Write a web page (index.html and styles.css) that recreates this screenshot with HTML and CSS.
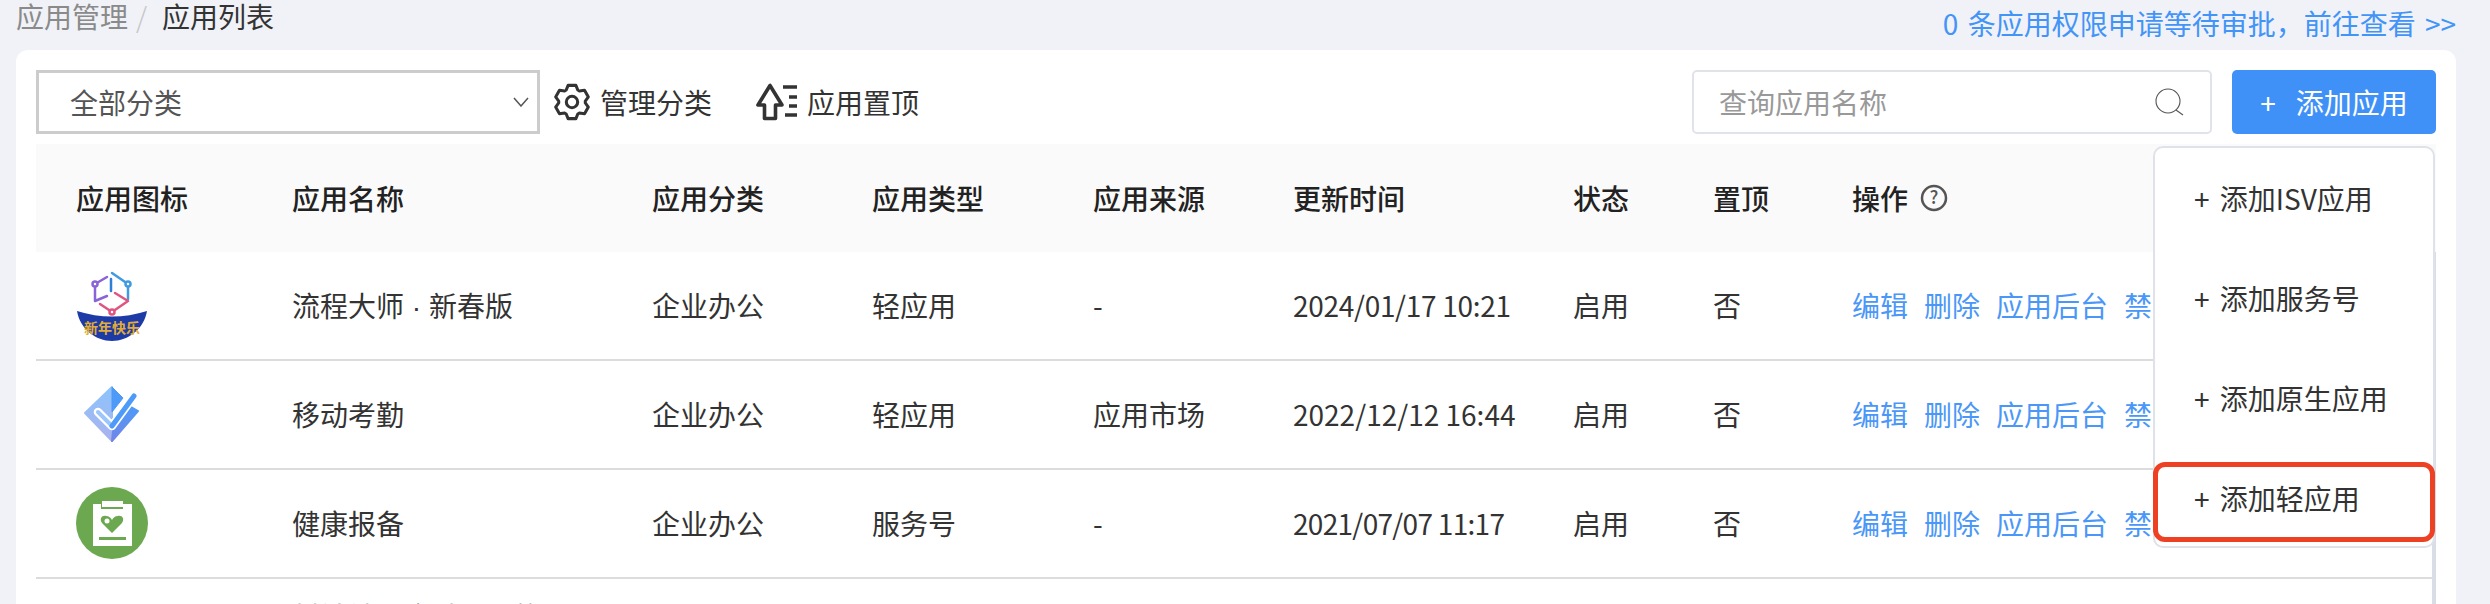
FILE: index.html
```html
<!DOCTYPE html>
<html lang="zh-CN">
<head>
    <meta charset="UTF-8">
    <title>应用列表</title>
    <link rel="stylesheet" href="styles.css">
</head>
<body>
    <div class="top-bar">
        <div class="breadcrumb">
            <span class="crumb-parent">应用管理</span>
            <span class="crumb-sep">/</span>
            <span class="crumb-current">应用列表</span>
        </div>
        <a class="approval-link">0 条应用权限申请等待审批，前往查看 &gt;&gt;</a>
    </div>

    <div class="card">
        <div class="toolbar">
            <div class="select-box">
                <span>全部分类</span>
                <svg class="chevron" width="16" height="10" viewBox="0 0 16 10"><path d="M1 1l7 8 7-8" fill="none" stroke="#555" stroke-width="1.5"/></svg>
            </div>
            <a class="tool-btn gear-btn">
                <svg width="38" height="38" viewBox="0 0 40 40" fill="none" stroke="#333" stroke-width="3.200" stroke-linejoin="round">
                    <path d="M13.9 7.4L15.9 2.5H24.1L26.1 7.4L27.8 8.4L33.2 7.7L37.2 14.7L34 19V21L37.2 25.3L33.2 32.3L27.8 31.6L26.1 32.6L24.1 37.5H15.9L13.9 32.6L12.2 31.6L6.8 32.3L2.8 25.3L6 21V19L2.8 14.7L6.8 7.7L12.2 8.4Z"/>
                    <circle cx="20" cy="20" r="6"/>
                </svg>
                管理分类
            </a>
            <a class="tool-btn pin-btn">
                <svg width="42" height="38" viewBox="0 0 42 38" fill="none" stroke="#333" stroke-width="3.600">
                    <path d="M14 2.500L2 22H8.500V35.500H19.500V22H26Z" stroke-linejoin="round"/>
                    <path d="M27 4H41M33 14H41M33 23H41M29 32H41"/>
                </svg>
                应用置顶
            </a>
            <div class="search-box">
                <span class="search-hint">查询应用名称</span>
                <svg width="30" height="28" viewBox="0 0 30 28" fill="none" stroke="#555" stroke-width="1.100"><circle cx="13" cy="13" r="12"/><path d="M21 22l7 5"/></svg>
            </div>
            <a class="add-btn"><span class="add-plus">+</span>添加应用</a>
        </div>

        <table class="app-table">
            <colgroup>
                <col class="col-icon"><col class="col-name"><col class="col-cate"><col class="col-type"><col class="col-src"><col class="col-time"><col class="col-state"><col class="col-top"><col class="col-ops">
            </colgroup>
            <thead>
                <tr>
                    <th>应用图标</th>
                    <th>应用名称</th>
                    <th>应用分类</th>
                    <th>应用类型</th>
                    <th>应用来源</th>
                    <th>更新时间</th>
                    <th>状态</th>
                    <th>置顶</th>
                    <th>
                        <span class="ops-head">操作
                            <svg width="28" height="28" viewBox="0 0 28 28"><circle cx="14" cy="14" r="12" fill="none" stroke="#555" stroke-width="2.500"/><text x="14" y="20" text-anchor="middle" class="help-mark">?</text></svg>
                        </span>
                    </th>
                </tr>
            </thead>
            <tbody>
                <tr>
                    <td>
                        <svg class="app-icon" viewBox="0 0 72 72" fill="none" stroke-width="2.500" stroke-linecap="round" stroke-linejoin="round">
                            <path d="M31 8L19 15V32L31 27" stroke="#8a63d8"/>
                            <path d="M36 4L52 15V30" stroke="#3f9ae0"/>
                            <path d="M35 10V22" stroke="#2f7fd6"/>
                            <path d="M24 35L36 43L52 32L39 24" stroke="#e0557f"/>
                            <circle cx="19" cy="15" r="2.500" fill="#fff" stroke="#8a63d8"/>
                            <circle cx="52" cy="15" r="2.500" fill="#fff" stroke="#3f9ae0"/>
                            <circle cx="36" cy="43" r="2.500" fill="#fff" stroke="#e0557f"/>
                            <path d="M1 42Q36 53 71 42C68 60 52 72 36 72C20 72 4 60 1 42Z" fill="#1d3ba6" stroke="none"/>
                            <text x="36" y="64" text-anchor="middle" class="icon-label">新年快乐</text>
                        </svg>
                    </td>
                    <td>流程大师<span class="name-dot"> · </span>新春版</td>
                    <td>企业办公</td>
                    <td>轻应用</td>
                    <td>-</td>
                    <td class="time-narrow">2024/01/17 10:21</td>
                    <td>启用</td>
                    <td>否</td>
                    <td><div class="ops"><a>编辑</a><a>删除</a><a>应用后台</a><a>禁用</a></div></td>
                </tr>
                <tr>
                    <td>
                        <svg class="app-icon" viewBox="0 0 72 72">
                            <defs>
                                <linearGradient id="leftHalf" x1="0" y1="0" x2="0" y2="1"><stop offset="0" stop-color="#8cc4fc"/><stop offset="1" stop-color="#aab2ee"/></linearGradient>
                                <linearGradient id="rightHalf" x1="0" y1="0" x2="0" y2="1"><stop offset="0" stop-color="#4d9af8"/><stop offset="1" stop-color="#7285e8"/></linearGradient>
                            </defs>
                            <path d="M36 9L9 35L36 63Z" fill="url(#leftHalf)" stroke="url(#leftHalf)" stroke-width="2" stroke-linejoin="round"/>
                            <path d="M36 9L47 20L36 34Z" fill="#4d9af8" stroke="#4d9af8" stroke-width="1" stroke-linejoin="round"/>
                            <path d="M37 53L55 29L62 33L36 63Z" fill="url(#rightHalf)" stroke="url(#rightHalf)" stroke-width="2" stroke-linejoin="round"/>
                            <path d="M22 34L36 48L58 18" fill="none" stroke="#fff" stroke-width="8.500" stroke-linecap="round" stroke-linejoin="round"/>
                            <path d="M22 34L36 48" fill="none" stroke="#9cc6fb" stroke-width="4" stroke-linecap="round"/>
                            <path d="M36 48L58 18" fill="none" stroke="#4d9af8" stroke-width="5" stroke-linecap="round"/>
                        </svg>
                    </td>
                    <td>移动考勤</td>
                    <td>企业办公</td>
                    <td>轻应用</td>
                    <td>应用市场</td>
                    <td>2022/12/12 16:44</td>
                    <td>启用</td>
                    <td>否</td>
                    <td><div class="ops"><a>编辑</a><a>删除</a><a>应用后台</a><a>禁用</a></div></td>
                </tr>
                <tr>
                    <td>
                        <svg class="app-icon" viewBox="0 0 72 72">
                            <circle cx="36" cy="36" r="36" fill="#6ca850"/>
                            <path d="M17 17H25V22H47V17H56V59H17Z" fill="#fff"/>
                            <rect x="26" y="14" width="21" height="6" fill="#fff"/>
                            <path d="M36 46L26 36C23 32 26 28 30 29C33 29 35 31 36 33C37 31 39 29 42 29C46 28 49 32 46 36Z" fill="#6ca850"/>
                            <circle cx="31" cy="34" r="2.500" fill="#fff"/>
                            <rect x="23" y="50" width="27" height="3" fill="#6ca850"/>
                        </svg>
                    </td>
                    <td>健康报备</td>
                    <td>企业办公</td>
                    <td>服务号</td>
                    <td>-</td>
                    <td class="time-narrower">2021/07/07 11:17</td>
                    <td>启用</td>
                    <td>否</td>
                    <td><div class="ops"><a>编辑</a><a>删除</a><a>应用后台</a><a>禁用</a></div></td>
                </tr>
                <tr>
                    <td></td>
                    <td class="long-name">村镇社区全域<span class="name-dot"> · </span>我的服</td>
                    <td></td><td></td><td></td><td></td><td></td><td></td><td></td>
                </tr>
            </tbody>
        </table>

        <div class="add-menu">
            <div class="menu-item">+ 添加ISV应用</div>
            <div class="menu-item">+ 添加服务号</div>
            <div class="menu-item">+ 添加原生应用</div>
            <div class="menu-item marked">+ 添加轻应用</div>
        </div>
    </div>
</body>
</html>
```

FILE: styles.css
```css
html, body {
    height: 604px;
    overflow: hidden;
}
body {
    margin: 0;
    padding: 0 34px 0 16px;
    background-color: #f0f2f7;
    color: #333;
    font-family: "Noto Sans CJK SC", "Liberation Sans", sans-serif;
    font-size: 28px;
}
a {
    cursor: pointer;
}

/* 顶部面包屑 */
.top-bar {
    display: flex;
    justify-content: space-between;
    align-items: flex-start;
    height: 50px;
}
.breadcrumb {
    display: flex;
    line-height: 32px;
}
.crumb-parent {
    color: #8a8a8a;
}
.crumb-sep {
    color: #c4c4c4;
    margin: 0 15px 0 8px;
    font-weight: 300;
}
.crumb-current {
    color: #333;
}
.approval-link {
    line-height: 46px;
    word-spacing: 3px;
    color: #4394f7;
}

/* 卡片 */
.card {
    position: relative;
    background-color: #fff;
    border-radius: 12px 12px 0 0;
    padding: 20px 20px 0;
}
.toolbar {
    display: flex;
    align-items: center;
    height: 64px;
    margin-bottom: 10px;
}
.select-box {
    display: flex;
    justify-content: space-between;
    align-items: center;
    box-sizing: border-box;
    width: 504px;
    height: 64px;
    padding: 0 8px 0 31px;
    border: 3px solid #ccc;
    color: #555;
}
.tool-btn {
    display: flex;
    align-items: center;
}
.gear-btn {
    margin-left: 13px;
}
.gear-btn svg {
    margin-right: 9px;
}
.pin-btn {
    margin-left: 44px;
}
.pin-btn svg {
    margin-right: 9px;
}
.search-box {
    display: flex;
    justify-content: space-between;
    align-items: center;
    box-sizing: border-box;
    width: 520px;
    height: 64px;
    margin-left: auto;
    padding: 0 25px 0 25px;
    border: 2px solid #e0e3ea;
    border-radius: 5px;
}
.search-hint {
    color: #999;
}
.add-btn {
    display: flex;
    justify-content: center;
    align-items: center;
    width: 204px;
    height: 64px;
    margin-left: 20px;
    border-radius: 5px;
    background-color: #4091f7;
    color: #fff;
}
.add-plus {
    margin-right: 20px;
}

/* 表格 */
.app-table {
    width: 2400px;
    table-layout: fixed;
    border-collapse: separate;
    border-spacing: 0;
}
.col-icon { width: 216px; }
.col-name { width: 360px; }
.col-cate { width: 220px; }
.col-type { width: 221px; }
.col-src { width: 200px; }
.col-time { width: 280px; }
.col-state { width: 140px; }
.col-top { width: 139px; }
.app-table th {
    height: 108px;
    padding: 0 0 0 40px;
    background-color: #fafafa;
    color: #222;
    font-weight: 500;
    text-align: left;
}
.app-table td {
    box-sizing: border-box;
    height: 109px;
    padding: 0 0 2px 40px;
    border-bottom: 2px solid #dcdcdc;
    white-space: nowrap;
    overflow: hidden;
}
.app-table td:last-child {
    border-right: 4px solid #d8dde6;
}
.time-narrow {
    letter-spacing: -0.3px;
}
.time-narrower {
    letter-spacing: -0.7px;
}
.name-dot {
    font-family: "Liberation Sans", sans-serif;
}
.ops-head {
    display: inline-flex;
    align-items: center;
    gap: 12px;
}
.help-mark {
    font-size: 18px;
    fill: #555;
}
.app-icon {
    display: block;
    width: 72px;
    height: 72px;
}
.icon-label {
    font-size: 14px;
    font-weight: 700;
    fill: #e3ac35;
}
.ops {
    display: flex;
    gap: 16px;
    color: #4a97f8;
}
.app-table td.long-name {
    padding-top: 17px;
    vertical-align: top;
    line-height: 40px;
}

/* 添加应用下拉 */
.add-menu {
    position: absolute;
    top: 96px;
    right: 21px;
    box-sizing: border-box;
    width: 282px;
    height: 402px;
    background-color: #fff;
    border: 2px solid #dfe2e9;
    border-radius: 10px;
}
.menu-item {
    position: relative;
    height: 100px;
    padding-left: 39px;
    line-height: 100px;
    color: #333;
    word-spacing: 4px;
}
.menu-item.marked::after {
    content: "";
    position: absolute;
    top: 14px;
    left: -2px;
    right: -2px;
    height: 80px;
    box-sizing: border-box;
    border: 5px solid #ee4023;
    border-radius: 12px;
}
```
